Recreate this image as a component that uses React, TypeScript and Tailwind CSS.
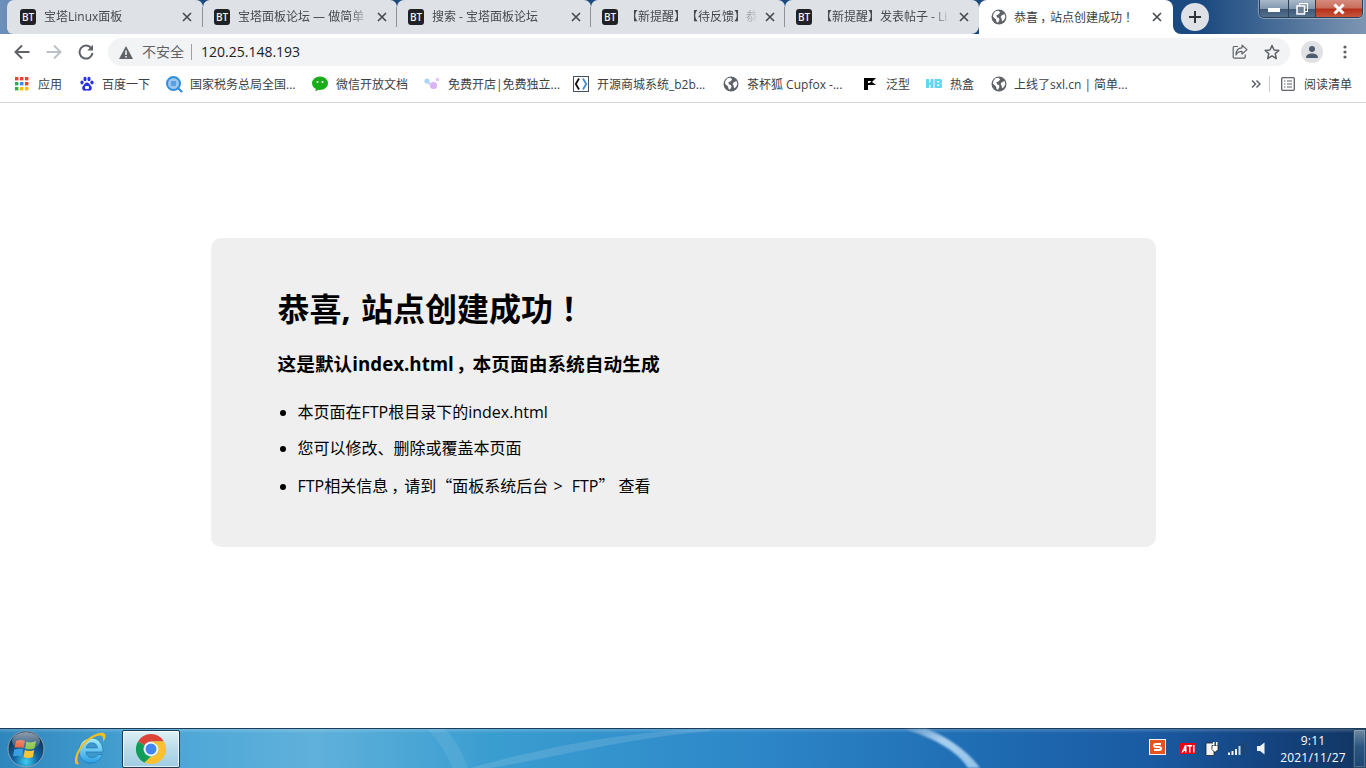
import React from "react";

const Bt = () => (
  <span className="flex h-4 w-4 shrink-0 items-center justify-center rounded-[3px] bg-[#202124] text-[10px] font-semibold leading-none text-[#f1f1f1]">BT</span>
);

const Globe = () => (
  <svg width="16" height="16" viewBox="0 0 16 16" className="shrink-0">
    <circle cx="8" cy="8" r="7.5" fill="#5f6368" />
    <path d="M4.5 2.2 L7.5 1.8 L9.2 3.4 L7.4 5.6 L5.4 6.2 L6 8.4 L8 9 L8.4 11 L7 13.8 L5.6 13 L5 10.4 L2 7.8 L2.4 5 Z M10.6 6.4 L13.4 5 L14.4 8 L13 11 L11 12.2 L10.6 9.6 L9.6 8 Z" fill="#fff" />
  </svg>
);

const Close = () => (
  <svg width="10" height="10" viewBox="0 0 10 10" className="shrink-0">
    <path d="M1 1 L9 9 M9 1 L1 9" stroke="#45484c" strokeWidth="1.6" />
  </svg>
);

const Pu = ({ children }: { children: React.ReactNode }) => (
  <span className="inline-block w-[1em] text-center [font-feature-settings:'palt'] [font-family:'Noto_Sans_CJK_SC',sans-serif]">{children}</span>
);
const Sc = ({ children }: { children: React.ReactNode }) => (
  <span className="[font-family:'Noto_Sans_CJK_SC',sans-serif]">{children}</span>
);

function Tab({ title, first, last, icon }: { title: string; first?: boolean; last?: boolean; icon?: React.ReactNode }) {
  return (
    <div className={`relative flex h-[34px] shrink-0 items-center rounded-t-[7px] bg-[#dee1e6] ${first ? "w-[196px] rounded-bl-[6px] pl-[13px] pr-[9px]" : "w-[194px] pl-[11px] pr-[8px]"} ${last ? "rounded-br-[8px]" : ""}`}>
      {icon ?? <Bt />}
      <span className="ml-2 w-[132px] overflow-hidden whitespace-nowrap text-[12px] leading-[18px] text-[#45484c] [mask-image:linear-gradient(90deg,#000_84%,transparent_100%)]">{title}</span>
      <span className="ml-auto flex w-[14px] justify-center"><Close /></span>
      {!last && <span className="absolute right-0 top-[7px] h-[20px] w-px bg-[#8f9297]" />}
    </div>
  );
}

const items: { w: number; g: number; label: string; icon: React.ReactNode }[] = [
  {
    w: 64, g: 9, label: "应用", icon: (
      <svg width="14" height="14" viewBox="0 0 14 14" className="shrink-0">
        {[["#ea4335", "#ea4335", "#ea4335"], ["#34a853", "#4285f4", "#ea4335"], ["#34a853", "#fbbc04", "#fbbc04"]].map((r, y) =>
          r.map((c, x) => <rect key={`${x}${y}`} x={x * 5} y={y * 5} width="3.4" height="3.4" fill={c} />)
        )}
      </svg>
    ),
  },
  {
    w: 87, g: 7, label: "百度一下", icon: (
      <svg width="16" height="16" viewBox="0 0 16 16" className="shrink-0">
        <g fill="#2932e1">
          <ellipse cx="3" cy="6.5" rx="1.6" ry="2.1" /><ellipse cx="6" cy="3" rx="1.6" ry="2.2" /><ellipse cx="10" cy="3" rx="1.6" ry="2.2" /><ellipse cx="13" cy="6.5" rx="1.6" ry="2.1" />
          <path d="M8 6.5 C6 6.5 5.5 8.5 4 10 C2.5 11.5 3 15 6 14.7 C7.5 14.5 8.5 14.5 10 14.7 C13 15 13.5 11.5 12 10 C10.5 8.5 10 6.5 8 6.5 Z" />
        </g>
        <rect x="6" y="10" width="4" height="3" rx="1" fill="#fff" />
      </svg>
    ),
  },
  {
    w: 146, g: 7, label: "国家税务总局全国...", icon: (
      <svg width="17" height="17" viewBox="0 0 17 17" className="shrink-0">
        <circle cx="7.5" cy="7.5" r="6.5" fill="#9cc6ee" stroke="#2f8fe0" strokeWidth="2" />
        <rect x="5" y="5" width="5" height="5" fill="#5a9fe0" />
        <path d="M12 12 L15.5 15.5" stroke="#2f8fe0" strokeWidth="2.2" strokeLinecap="round" />
      </svg>
    ),
  },
  {
    w: 112, g: 8, label: "微信开放文档", icon: (
      <svg width="16" height="16" viewBox="0 0 16 16" className="shrink-0">
        <ellipse cx="8" cy="7.2" rx="8" ry="6.7" fill="#1aad19" />
        <path d="M4 12 L3.5 15.5 L7.5 13 Z" fill="#1aad19" />
        <circle cx="5.5" cy="6" r="1" fill="#fff" /><circle cx="10.5" cy="6" r="1" fill="#fff" />
      </svg>
    ),
  },
  {
    w: 149, g: 8, label: "免费开店|免费独立...", icon: (
      <svg width="16" height="16" viewBox="0 0 16 16" className="shrink-0">
        <circle cx="3" cy="5" r="2.6" fill="#a9d5f7" /><circle cx="9.5" cy="9.5" r="3.6" fill="#d9b3f2" /><circle cx="13.5" cy="3.5" r="1.8" fill="#e8c4f5" /><circle cx="5.5" cy="7.5" r="1.2" fill="#c7c8f5" />
      </svg>
    ),
  },
  {
    w: 150, g: 8, label: "开源商城系统_b2b...", icon: (
      <svg width="16" height="16" viewBox="0 0 16 16" className="shrink-0">
        <rect x="0.5" y="0.5" width="15" height="15" fill="#fff" stroke="#44525f" />
        <path d="M6 2.5 L2.8 8 L6 13.5" fill="none" stroke="#111" strokeWidth="1.8" />
        <path d="M10 2.5 L13.2 8 L10 13.5" fill="none" stroke="#3a8fd8" strokeWidth="1.8" />
      </svg>
    ),
  },
  { w: 140, g: 8, label: "茶杯狐 Cupfox -...", icon: <Globe /> },
  {
    w: 63, g: 9, label: "泛型", icon: (
      <svg width="14" height="14" viewBox="0 0 14 14" className="shrink-0">
        <path d="M1 1 H13 L9 5 L13 8 H5 V13 H1 Z" fill="#000" />
        <path d="M5 4 H8.5 L6.5 6 H5 Z" fill="#fff" />
      </svg>
    ),
  },
  {
    w: 65, g: 8, label: "热盒", icon: (
      <svg width="16" height="16" viewBox="0 0 16 16" className="shrink-0">
        <g fill="#62d5f2">
          <path d="M0 3 H3 V6.5 H4.5 V3 H7.5 V12 H4.5 V8.7 H3 V12 H0 Z" />
          <path d="M8.5 3 H14.5 Q16 3 16 4.5 V6 Q16 7.5 15 7.5 Q16 7.5 16 9 V10.5 Q16 12 14.5 12 H8.5 Z" />
        </g>
        <rect x="11" y="5" width="2.4" height="1.4" fill="#fff" /><rect x="11" y="8.6" width="2.4" height="1.4" fill="#fff" />
      </svg>
    ),
  },
  { w: 250, g: 7, label: "上线了sxl.cn | 简单...", icon: <Globe /> },
];

function Orb() {
  return (
    <svg width="38" height="38" viewBox="0 0 38 38">
      <defs>
        <radialGradient id="orbBg" cx="50%" cy="85%" r="75%">
          <stop offset="0" stopColor="#3fd0f2" /><stop offset="0.45" stopColor="#12639f" /><stop offset="1" stopColor="#0f2f4f" />
        </radialGradient>
        <linearGradient id="orbGl" x1="0" y1="0" x2="0" y2="1">
          <stop offset="0" stopColor="#fff" stopOpacity="0.55" /><stop offset="1" stopColor="#fff" stopOpacity="0.05" />
        </linearGradient>
      </defs>
      <circle cx="19" cy="19" r="18" fill="url(#orbBg)" stroke="#8aa3b5" strokeWidth="1" />
      <path d="M9 11 Q13.5 9 18 11 L16.5 18 Q12 16.5 7.5 18 Z" fill="#e8512b" />
      <path d="M19.5 11.5 Q24 13.5 29 11 L27.5 18.5 Q23 20.5 18 18.5 Z" fill="#7fbf3c" />
      <path d="M7.2 19.5 Q12 18 16.2 19.5 L15 26.5 Q10.5 25 6 26.5 Z" fill="#3a9fe0" />
      <path d="M17.8 20 Q22.5 22 27.2 20 L26 27 Q21 29 16.6 27 Z" fill="#f7c53a" />
      <ellipse cx="19" cy="11" rx="14" ry="9" fill="url(#orbGl)" />
    </svg>
  );
}

function IE() {
  return (
    <svg width="34" height="36" viewBox="0 0 34 36">
      <defs>
        <linearGradient id="ieG" x1="0" y1="0" x2="0" y2="1">
          <stop offset="0" stopColor="#a8ecfc" /><stop offset="1" stopColor="#2a9fe4" />
        </linearGradient>
      </defs>
      <path fillRule="evenodd" d="M18 7 C26 7 30 13 30 21 H13 C13.5 25 16 26.5 19 26.5 C22 26.5 24 25.3 25 23.5 H29.5 C27.5 29 23.5 32 18 32 C10.5 32 6 27 6 19.5 C6 12 11 7 18 7 Z M13 17 H24.5 C24 13.5 22 11.8 19 11.8 C16 11.8 13.7 13.5 13 17 Z" fill="url(#ieG)" stroke="#1a6fb0" strokeWidth="0.6" />
      <path d="M3 33 C0 30 3 19 12 10 C20 3 29 0 32 3 C33.5 5 32 8 30 11 C30.5 7 30 4.5 27 4.5 C22 4.5 13 10 8 18 C4.5 24 3 30 6 33 C5 33.5 4 33.5 3 33 Z" fill="#f2c01e" />
    </svg>
  );
}

function ChromeLogo() {
  return (
    <svg width="30" height="30" viewBox="0 0 48 48">
      <path d="M24 0 A24 24 0 0 1 44.8 12 H24 A12 12 0 0 0 13.6 18 L3.2 12 A24 24 0 0 1 24 0 Z" fill="#db4437" />
      <path d="M3.2 12 L13.6 18 A12 12 0 0 0 24 36 L13.6 46 A24 24 0 0 1 3.2 12 Z" fill="#0f9d58" />
      <path d="M44.8 12 A24 24 0 0 1 24 48 A24 24 0 0 1 13.6 45.6 L24 36 A12 12 0 0 0 34.4 18 L24 12 Z" fill="#fbc02d" />
      <circle cx="24" cy="24" r="11" fill="#fff" />
      <circle cx="24" cy="24" r="8.8" fill="#4285f4" />
    </svg>
  );
}

export default function App() {
  return (
    <div className="flex h-screen w-full flex-col overflow-hidden bg-white [font-family:'Open_Sans','Noto_Sans_CJK_SC',sans-serif] [text-spacing-trim:space-all]">
      {/* tab strip */}
      <div className="relative flex h-[34px] shrink-0 pl-[7px] bg-[linear-gradient(90deg,#6d8fba_0,#1b4a80_14%,#1b4a80_88%,#7d95b2_100%)]">
        <Tab first title="宝塔Linux面板" />
        <Tab title="宝塔面板论坛 — 做简单" />
        <Tab title="搜索 - 宝塔面板论坛" />
        <Tab title="【新提醒】【待反馈】恭" />
        <Tab last title="【新提醒】发表帖子 - Li" />
        <div className="relative flex h-[34px] w-[194px] shrink-0 items-center rounded-t-[8px] bg-white pl-[12px] pr-[9px]">
          <Globe />
          <span className="ml-[7px] whitespace-nowrap text-[12px] leading-[18px] text-[#3c4043]">恭喜<Pu>，</Pu>站点创建成功<Pu>！</Pu></span>
          <span className="ml-auto flex w-[14px] justify-center"><Close /></span>
          <span className="absolute -right-[8px] bottom-0 h-[8px] w-[8px] bg-white"><span className="block h-full w-full rounded-bl-[8px] bg-[#1b4a80]" /></span>
        </div>
        <button className="ml-[8px] mt-[3px] flex h-[28px] w-[28px] items-center justify-center rounded-full bg-[#dee1e6]">
          <svg width="14" height="14" viewBox="0 0 14 14"><path d="M7 1 V13 M1 7 H13" stroke="#2f3237" strokeWidth="2" /></svg>
        </button>
        {/* window controls */}
        <div className="ml-auto mr-[3px] flex h-[18px] w-[104px] overflow-hidden rounded-b-[5px] border border-t-0 border-[#2b3f55] shadow-[0_0_0_1px_rgba(255,255,255,0.35)]">
          <div className="flex w-[29px] items-center justify-center border-r border-[#2b3f55] bg-[linear-gradient(180deg,#a9b9ca,#8397ad_50%,#3f5a78_55%,#54708f)]">
            <span className="mt-[2px] h-[4px] w-[12px] bg-white" />
          </div>
          <div className="flex w-[27px] items-center justify-center border-r border-[#2b3f55] bg-[linear-gradient(180deg,#a9b9ca,#8397ad_50%,#3f5a78_55%,#54708f)]">
            <svg width="12" height="12" viewBox="0 0 12 12"><rect x="3.5" y="0.5" width="8" height="8" fill="none" stroke="#fff" /><rect x="1" y="3" width="7.5" height="8" fill="#6d8198" stroke="#fff" strokeWidth="1.5" /></svg>
          </div>
          <div className="flex flex-1 items-center justify-center bg-[linear-gradient(180deg,#d58a7c,#c86f5c_45%,#b5301a_55%,#c8553c)]">
            <svg width="12" height="12" viewBox="0 0 12 12"><path d="M1.5 1.5 L10.5 10.5 M10.5 1.5 L1.5 10.5" stroke="#fff" strokeWidth="3" /></svg>
          </div>
        </div>
      </div>

      {/* toolbar */}
      <div className="flex h-[32px] shrink-0 items-end bg-white">
        <div className="flex h-[28px] w-[108px] shrink-0 items-center pl-[14px]">
          <svg width="16" height="16" viewBox="0 0 16 16" className="shrink-0"><path d="M15.5 8 H2 M8 1.5 L1.5 8 L8 14.5" fill="none" stroke="#5f6368" strokeWidth="2" /></svg>
          <svg width="16" height="16" viewBox="0 0 16 16" className="ml-[16px] shrink-0"><path d="M0.5 8 H14 M8 1.5 L14.5 8 L8 14.5" fill="none" stroke="#bdc1c6" strokeWidth="2" /></svg>
          <svg width="16" height="16" viewBox="0 0 16 16" className="ml-[16px] shrink-0"><path d="M13.5 4.5 A6.5 6.5 0 1 0 14.5 9" fill="none" stroke="#5f6368" strokeWidth="2" /><path d="M15 0.8 V6.5 H9.3 Z" fill="#5f6368" /></svg>
        </div>
        <div className="flex h-[28px] w-[1182px] shrink-0 items-center rounded-full bg-[#f1f3f4] pl-[11px] pr-[10px]">
          <svg width="14" height="13" viewBox="0 0 14 13" className="shrink-0"><path d="M7 0 L14 13 H0 Z" fill="#5f6368" /><rect x="6.2" y="4.5" width="1.6" height="4.5" fill="#f1f3f4" /><rect x="6.2" y="10" width="1.6" height="1.6" fill="#f1f3f4" /></svg>
          <span className="ml-[9px] text-[14px] leading-[18px] text-[#5f6368]">不安全</span>
          <span className="ml-[7px] h-[16px] w-px bg-[#9aa0a6]" />
          <span className="ml-[9px] text-[14px] leading-[18px] text-[#202124]">120.25.148.193</span>
          <svg width="16" height="16" viewBox="0 0 16 16" className="ml-auto shrink-0"><path d="M6 2.5 H2.5 A1.2 1.2 0 0 0 1.2 3.7 V13 A1.2 1.2 0 0 0 2.5 14.2 H12 A1.2 1.2 0 0 0 13.2 13 V10.5" fill="none" stroke="#5f6368" strokeWidth="1.2" /><path d="M10 1.2 L15 5.6 L10 10 V7.4 C7 7.4 5.2 8.4 4 11 C4 7 6 4 10 3.8 Z" fill="none" stroke="#5f6368" strokeWidth="1.2" strokeLinejoin="round" /></svg>
          <svg width="16" height="16" viewBox="0 0 16 16" className="ml-[16px] shrink-0"><path d="M8 1.5 L10 6 L14.9 6.4 L11.2 9.6 L12.3 14.5 L8 11.9 L3.7 14.5 L4.8 9.6 L1.1 6.4 L6 6 Z" fill="none" stroke="#5f6368" strokeWidth="1.5" strokeLinejoin="round" /></svg>
        </div>
        <div className="flex h-[28px] flex-1 items-center pl-[11px]">
          <span className="flex h-[22px] w-[22px] items-center justify-center rounded-full bg-[#dfe1e5]">
            <svg width="14" height="14" viewBox="0 0 14 14"><circle cx="7" cy="4" r="3" fill="#4f5b6e" /><path d="M1 13 C1 9.5 4 8.5 7 8.5 C10 8.5 13 9.5 13 13 Z" fill="#4f5b6e" /></svg>
          </span>
          <svg width="4" height="14" viewBox="0 0 4 14" className="ml-[20px]"><circle cx="2" cy="2" r="1.6" fill="#5f6368" /><circle cx="2" cy="7" r="1.6" fill="#5f6368" /><circle cx="2" cy="12" r="1.6" fill="#5f6368" /></svg>
        </div>
      </div>

      {/* bookmarks */}
      <div className="flex h-[37px] shrink-0 items-center border-b border-[#d2d4d7] bg-white pl-[15px] text-[12px] leading-[18px] text-[#3c4043]">
        {items.map((it) => (
          <div key={it.label} className="flex shrink-0 items-center" style={{ width: it.w }}>
            {it.icon}
            <span className="mt-[2px] whitespace-nowrap" style={{ marginLeft: it.g }}>{it.label}</span>
          </div>
        ))}
        <svg width="10" height="10" viewBox="0 0 10 10" className="ml-[10px] shrink-0"><path d="M1 1.5 L4.5 5 L1 8.5 M5.5 1.5 L9 5 L5.5 8.5" fill="none" stroke="#5f6368" strokeWidth="1.5" /></svg>
        <span className="ml-[8px] h-[16px] w-px bg-[#c8cacd]" />
        <svg width="14" height="14" viewBox="0 0 14 14" className="ml-[11px] shrink-0"><rect x="0.7" y="0.7" width="12.6" height="12.6" rx="1" fill="none" stroke="#5f6368" strokeWidth="1.3" /><path d="M3 4 H4.5 M6 4 H11 M3 7 H4.5 M6 7 H11 M3 10 H4.5 M6 10 H11" stroke="#5f6368" strokeWidth="1.2" /></svg>
        <span className="ml-[9px] mt-[2px] whitespace-nowrap">阅读清单</span>
      </div>

      {/* page */}
      <main className="min-h-0 flex-1 bg-white pt-[135px]">
        <div className="mx-auto h-[309px] w-[945px] rounded-[10px] bg-[#efefef] pl-[67px] text-black">
          <h1 className="pt-[46px] text-[32px] font-bold leading-[46px]">恭喜, <span className="ml-[2px]">站点创建成功</span><Pu>！</Pu></h1>
          <h3 className="mt-[16px] text-[18.72px] font-bold leading-[30px]">这是默认index.html<Pu>，</Pu>本页面由系统自动生成</h3>
          <ul className="ml-[20px] mt-[21px] list-disc text-[16px] leading-[24px]">
            <li>本页面在FTP根目录下的index.html</li>
            <li className="mt-[12px]">您可以修改、删除或覆盖本页面</li>
            <li className="mt-[12.5px]">FTP相关信息<Pu>，</Pu>请到<Sc>“</Sc>面板系统后台<span className="ml-[1px] mr-[5px]"> &gt; </span>FTP<Sc>”</Sc> 查看</li>
          </ul>
        </div>
      </main>

      {/* taskbar */}
      <footer className="relative flex h-[40px] shrink-0 items-center border-t border-[#1d3c58] bg-[linear-gradient(90deg,#2f86bd_0,#4ba6d6_12%,#60b1db_23%,#3a9dd0_36%,#2d87c8_55%,#1f6cb3_72%,#1a5ba3_84%,#14437f_93%,#113561_100%)]">
        <div className="pointer-events-none absolute inset-x-0 top-0 h-[4px] bg-gradient-to-b from-white/20 to-transparent" />
        <svg className="pointer-events-none absolute left-[420px] top-0 h-[39px] w-[300px]" viewBox="0 0 300 39">
          <path d="M8 0 C18 12 28 26 32 39 H48 C44 26 36 10 24 0 Z" fill="#fff" opacity="0.08" />
          <path d="M70 39 C130 30 200 10 290 2 L290 0 C200 2 120 20 50 39 Z" fill="#fff" opacity="0.12" />
        </svg>
        <svg className="pointer-events-none absolute left-[900px] top-0 h-[39px] w-[90px] blur-[1px]" viewBox="0 0 90 39">
          <defs><linearGradient id="sw" x1="0" y1="0" x2="1" y2="1"><stop offset="0" stopColor="#fff" stopOpacity="0.15" /><stop offset="0.4" stopColor="#b9dbf5" stopOpacity="0.9" /><stop offset="1" stopColor="#a8d2f2" stopOpacity="0.85" /></linearGradient></defs>
          <path d="M4 0 C32 8 58 22 68 39 H80 C66 20 46 7 26 0 Z" fill="url(#sw)" />
        </svg>
        <div className="relative ml-[7px] flex h-[38px] w-[38px] items-center justify-center"><Orb /></div>
        <div className="relative ml-[28px] flex h-[36px] w-[34px] items-center justify-center"><IE /></div>
        <div className="relative ml-[15px] flex h-[38px] w-[58px] items-center justify-center rounded-[2px] border border-[#1c3b54] bg-[linear-gradient(180deg,#dff0f6,#b9dbe9_50%,#9fcde2)] shadow-[inset_0_0_0_1px_rgba(255,255,255,0.7)]">
          <ChromeLogo />
        </div>
        <div className="relative ml-auto flex h-full items-center">
          <svg width="17" height="16" viewBox="0 0 17 16" className="mb-[4px]"><rect x="0.5" y="0.5" width="16" height="15" fill="#e8531b" stroke="#f3f3f3" /><path d="M12 5 H7 Q5 5 5 6.5 Q5 8 7 8 H10 Q12 8 12 9.5 Q12 11 10 11 H5" fill="none" stroke="#fff" strokeWidth="2" /></svg>
          <svg width="16" height="11" viewBox="0 0 16 11" className="ml-[14px]"><rect width="16" height="11" fill="#f00014" /><path d="M1.5 9.5 L5 2 H6.5 V9.5 H5 V8 H3.8 L3 9.5 Z M7.3 2 H12.2 V3.5 H10.5 V9.5 H9 V3.5 H7.3 Z M13 2 H14.5 V9.5 H13 Z" fill="#fff" /></svg>
          <svg width="14" height="17" viewBox="0 0 14 16" className="ml-[9px]"><rect x="1" y="2.5" width="8" height="12.5" rx="1" fill="#f4f4f4" stroke="#222" strokeWidth="0.8" /><path d="M7 5 H13 V9 L10.5 11.5 H9.5 L7 9 Z" fill="#fff" stroke="#222" strokeWidth="0.8" /><rect x="8" y="1.5" width="1.5" height="3.5" fill="#fff" /><rect x="11" y="1.5" width="1.5" height="3.5" fill="#fff" /></svg>
          <svg width="16" height="12" viewBox="0 0 16 12" className="ml-[9px]"><g fill="#f2f6fa"><rect x="0" y="9.5" width="2" height="2.5" /><rect x="3.5" y="8" width="2" height="4" /><rect x="7" y="6" width="2" height="6" /></g><g fill="#cfd8e2"><rect x="10.5" y="3" width="2" height="9" /></g><rect x="14" y="0" width="2" height="12" fill="#24415f" /></svg>
          <svg width="8" height="13" viewBox="0 0 8 13" className="ml-[13px]"><path d="M0 4 H3 L7.5 0.5 V12.5 L3 9 H0 Z" fill="#f1f4f7" /></svg>
          <div className="ml-[11px] flex w-[74px] flex-col items-center text-[12px] leading-[17px] tracking-[0.2px] text-white">
            <span>9:11</span>
            <span>2021/11/27</span>
          </div>
          <div className="ml-[3px] h-[39px] w-[13px] border border-[#274a68] bg-[linear-gradient(180deg,#6f8aa0,#2b557f_45%,#1d4770)] shadow-[inset_0_0_0_1px_rgba(255,255,255,0.2)]" />
        </div>
      </footer>
    </div>
  );
}
